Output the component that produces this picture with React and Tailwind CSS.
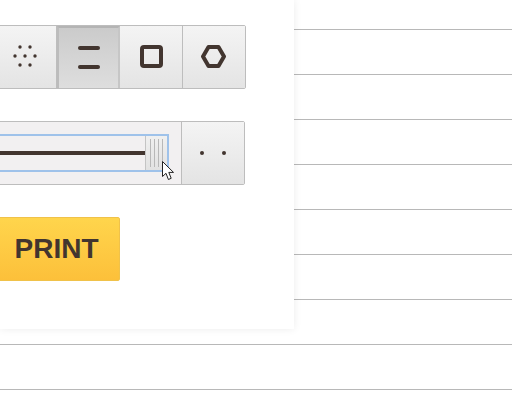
export default function App() {
  const cell = "w-[63px] h-full flex items-center justify-center bg-gradient-to-b from-[#f4f4f4] to-[#e4e4e4] border-r border-[#bdbdbd]";
  return (
    <div className="relative w-[512px] h-[402px] overflow-hidden bg-white" style={{ fontFamily: '"Liberation Sans", Arial, sans-serif' }}>
      <div className="flex flex-col">
        <div className="h-[30px] border-b border-[#b8b8b8]" />
        {[0,1,2,3,4,5,6,7].map((i) => (
          <div key={i} className="h-[45px] border-b border-[#b8b8b8]" />
        ))}
      </div>
      <div className="absolute left-0 top-0 w-[294px] h-[329px] bg-white shadow-[0_0_8px_rgba(0,0,0,0.08)] flex flex-col">
        <div className="mt-[25px] ml-[-6px] w-[252px] h-[64px] flex border border-[#bdbdbd] rounded-r-[2px]">
          <div className="w-[62px] h-full flex items-center justify-center bg-gradient-to-b from-[#f4f4f4] to-[#e4e4e4] border-r border-[#bdbdbd]">
            <svg width="24" height="24" viewBox="0 0 24 24" fill="#42352f" className="mr-[2px] mb-[2px]">
              <circle cx="7" cy="3" r="1.7" /><circle cx="17" cy="3" r="1.7" />
              <circle cx="2" cy="12" r="1.7" /><circle cx="12" cy="12" r="1.7" /><circle cx="22" cy="12" r="1.7" />
              <circle cx="7" cy="21" r="1.7" /><circle cx="17" cy="21" r="1.7" />
            </svg>
          </div>
          <div className="w-[63px] h-full flex items-center justify-center bg-gradient-to-b from-[#cbcbcb] to-[#dedede] border-x-2 border-t-2 border-l-[#bcbcbc] border-t-[#b4b4b4] border-r-[#c6c6c6]">
            <svg width="22" height="23" viewBox="0 0 22 23" fill="#42352f" className="mt-[-2px]">
              <rect x="0" y="0" width="22" height="4" rx="2" />
              <rect x="0" y="19" width="22" height="4" rx="2" />
            </svg>
          </div>
          <div className={cell}>
            <svg width="23" height="23" viewBox="0 0 23 23" fill="none" stroke="#42352f" strokeWidth="4" className="mb-[2px]">
              <rect x="2" y="2" width="19" height="19" rx="2" />
            </svg>
          </div>
          <div className="w-[62px] h-full flex items-center justify-center bg-gradient-to-b from-[#f4f4f4] to-[#e4e4e4]">
            <svg width="25" height="23" viewBox="0 0 25 23" fill="none" stroke="#42352f" strokeWidth="4" strokeLinejoin="round" className="mb-[2px] mr-[1px]">
              <path d="M7.5 2h10L23 11.5 17.5 21h-10L2 11.5z" />
            </svg>
          </div>
        </div>
        <div className="mt-[32px] ml-[-1px] w-[246px] h-[64px] flex border border-[#bdbdbd] rounded-r-[2px]">
          <div className="w-[182px] h-full flex items-center bg-[#f2f0f1] border-r border-[#bdbdbd]">
            <div className="w-[169px] h-[38px] flex items-center justify-end border-y-2 border-r-2 border-[#9fc2ea]">
              <div className="flex-1 h-[4px] bg-[#42352f]" />
              <div className="w-[22px] h-full flex items-center justify-center gap-[3px] bg-gradient-to-b from-[#f0f0f0] to-[#e2e2e2] border-l border-[#c4c4c4]">
                <div className="w-px h-[28px] bg-[#b8b8b8]" />
                <div className="w-px h-[28px] bg-[#b8b8b8]" />
                <div className="w-px h-[28px] bg-[#b8b8b8]" />
                <div className="w-px h-[28px] bg-[#b8b8b8]" />
              </div>
            </div>
          </div>
          <div className="flex-1 h-full flex items-center justify-center gap-[18px] bg-gradient-to-b from-[#f4f4f4] to-[#e4e4e4]">
            <div className="w-1 h-1 rounded-full bg-[#42352f]" />
            <div className="w-1 h-1 rounded-full bg-[#42352f]" />
          </div>
        </div>
        <div className="mt-[32px] ml-[-20px] w-[140px] h-[64px] flex items-center justify-center rounded-[2px] bg-gradient-to-b from-[#ffd54c] to-[#fcc03a] border border-[#f0c24a]">
          <span className="ml-[13px] text-[28px] font-bold text-[#42352f] leading-none">PRINT</span>
        </div>
      </div>
      <svg className="absolute left-[162px] top-[161px]" width="13" height="20" viewBox="0 0 13 20">
        <path d="M0.5 0.5V15.5L4 12.3L6.4 18.5L9.2 17.3L6.8 11.4H11.5z" fill="#fff" stroke="#222" strokeWidth="1" strokeLinejoin="round" />
      </svg>
    </div>
  );
}
